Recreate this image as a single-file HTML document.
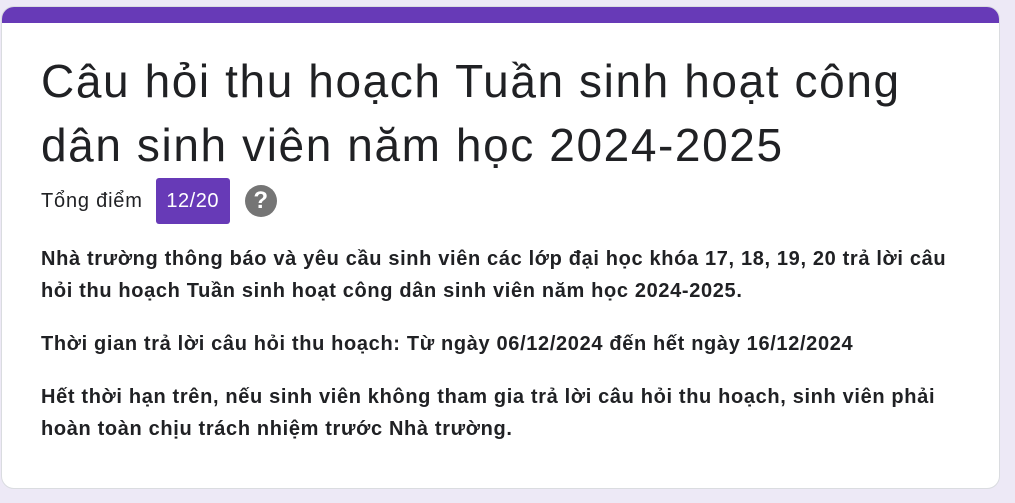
<!DOCTYPE html>
<html><head><meta charset="utf-8"><style>
html,body{margin:0;padding:0;background:#ede9f6;width:1015px;height:503px;overflow:hidden;font-family:"Liberation Sans",Roboto,sans-serif;}
.card{position:absolute;left:1px;top:6px;width:999px;height:483px;background:#fff;border-radius:13px;border:1px solid #dadce0;box-sizing:border-box;overflow:hidden;}
.bar{position:absolute;left:0;top:0;right:0;height:16px;background:#673ab7;}
.title{position:absolute;left:39px;top:42px;font-size:46px;letter-spacing:1.6px;line-height:64px;color:#202124;width:900px;}
.score{position:absolute;left:39px;top:171px;height:46px;display:flex;align-items:center;font-size:20px;letter-spacing:0.8px;color:#202124;}
.badge{margin-left:13px;background:#673ab7;color:#fff;height:46px;line-height:46px;border-radius:3px;width:74px;text-align:center;letter-spacing:0.5px;}
.help{margin-left:15px;width:32px;height:32px;border-radius:50%;background:#757575;color:#fff;font-weight:bold;font-size:24px;text-align:center;line-height:32px;letter-spacing:0;}
.desc{position:absolute;left:39px;top:236px;width:935px;font-size:20px;letter-spacing:0.65px;font-weight:bold;line-height:32px;color:#202124;}
.desc p{margin:0 0 21px 0;}
</style></head><body>
<div class="card"><div class="bar"></div>
<div class="title">Câu hỏi thu hoạch Tuần sinh hoạt công<br>dân sinh viên năm học 2024-2025</div>
<div class="score">Tổng điểm<div class="badge">12/20</div><div class="help">?</div></div>
<div class="desc">
<p>Nhà trường thông báo và yêu cầu sinh viên các lớp đại học khóa 17, 18, 19, 20 trả lời câu<br>hỏi thu hoạch Tuần sinh hoạt công dân sinh viên năm học 2024-2025.</p>
<p>Thời gian trả lời câu hỏi thu hoạch: Từ ngày 06/12/2024 đến hết ngày 16/12/2024</p>
<p>Hết thời hạn trên, nếu sinh viên không tham gia trả lời câu hỏi thu hoạch, sinh viên phải<br>hoàn toàn chịu trách nhiệm trước Nhà trường.</p>
</div>
</div>
</body></html>
